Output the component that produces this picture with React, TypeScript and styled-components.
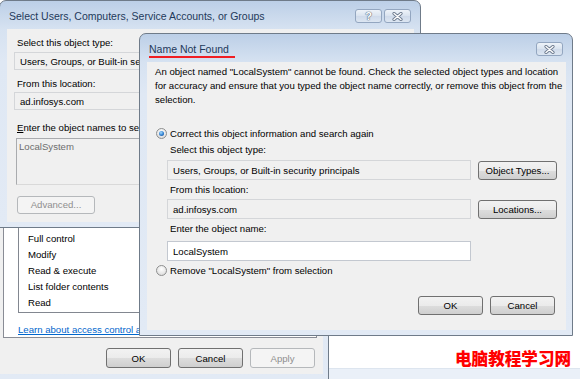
import styled, { createGlobalStyle } from "styled-components";

const GlobalStyle = createGlobalStyle`
  html, body {
    margin: 0;
    padding: 0;
    background: #fff;
  }
`;

const Desktop = styled.div`
  position: relative;
  width: 580px;
  height: 379px;
  overflow: hidden;
  background: #fff;
  font-family: "Liberation Sans", Arial, sans-serif;
  font-size: 9.6px;
  color: #000;
`;

// a window frame placed on the desktop
const Frame = styled.div<{ $left: number; $top: number; $width: number; $height: number }>`
  position: absolute;
  left: ${(p) => p.$left}px;
  top: ${(p) => p.$top}px;
  width: ${(p) => p.$width}px;
  height: ${(p) => p.$height}px;
  box-sizing: border-box;
  display: flex;
  flex-direction: column;
  padding: 0 6px 5px 7px;
  border: 1px solid #6f7b89;
  border-radius: 7px 7px 0 0;
  background: linear-gradient(#bccfe7 0px, #d6e2f1 28px, #dfe8f4 60px, #e2eaf5 100%);
`;

const TitleBar = styled.div`
  height: 28px;
  flex: none;
  display: flex;
  align-items: flex-start;
`;

const Title = styled.span<{ $mark?: boolean }>`
  margin: 8px 0 0 2px;
  font-size: 10.5px;
  line-height: 14px;
  color: #1e395b;
  border-bottom: ${(p) => (p.$mark ? "2px solid #f01e23" : "none")};
  padding-right: ${(p) => (p.$mark ? "6px" : "0")};
`;

const CaptionButtons = styled.div`
  margin-left: auto;
  margin-top: 8px;
  margin-right: 3px;
  display: flex;
  gap: 2px;
`;

const CaptionButton = styled.div`
  width: 27px;
  height: 14px;
  box-sizing: border-box;
  border: 1px solid #93a6c0;
  border-radius: 3px;
  background: linear-gradient(#eef3f9, #d9e3ef 50%, #cfdaea 51%, #dce6f2);
  display: flex;
  align-items: center;
  justify-content: center;
  font-size: 11px;
  font-weight: bold;
  color: #fff;
  text-shadow: 0 0 1px #5b6b80, 0 0 1px #5b6b80, 0 0 1px #5b6b80;
`;

const CloseGlyph = () => (
  <svg width="11" height="9" viewBox="0 0 11 9">
    <path d="M2 1.5 L9 7.5 M9 1.5 L2 7.5" stroke="#6d7b8f" strokeWidth="3.2" strokeLinecap="round" />
    <path d="M2 1.5 L9 7.5 M9 1.5 L2 7.5" stroke="#fff" strokeWidth="1.4" strokeLinecap="round" />
  </svg>
);

const Body = styled.div`
  flex: 1;
  background: #f0f0f0;
  display: flex;
  flex-direction: column;
  min-height: 0;
`;

const Label = styled.div<{ $mt: number; $indent?: number }>`
  margin-top: ${(p) => p.$mt}px;
  padding-left: ${(p) => p.$indent ?? 3}px;
  line-height: 14px;
  white-space: nowrap;
`;

const Field = styled.div<{ $width: number; $height?: number; $white?: boolean; $mt?: number }>`
  width: ${(p) => p.$width}px;
  height: ${(p) => p.$height ?? 20}px;
  margin-top: ${(p) => p.$mt ?? 0}px;
  box-sizing: border-box;
  flex: none;
  border: 1px solid ${(p) => (p.$white ? "#c3c8d0" : "#d4d6d9")};
  background: ${(p) => (p.$white ? "#fff" : "#f0f0f0")};
  padding-left: 5px;
  display: flex;
  align-items: center;
  white-space: nowrap;
  overflow: hidden;
`;

const NamesBox = styled.div`
  margin: 3px 0 0 2px;
  width: 380px;
  height: 47px;
  box-sizing: border-box;
  border: 1px solid #a9abae;
  border-right-color: #d9d9d9;
  border-bottom-color: #d9d9d9;
  padding: 1px 2px;
  line-height: 14px;
  color: #6d6d6d;
`;

const Button = styled.div<{ $width: number; $height?: number; $disabled?: boolean }>`
  width: ${(p) => p.$width}px;
  height: ${(p) => p.$height ?? 19}px;
  box-sizing: border-box;
  flex: none;
  border: 1px solid ${(p) => (p.$disabled ? "#b5b8bb" : "#707070")};
  border-radius: 3px;
  background: ${(p) =>
    p.$disabled
      ? "#f4f4f4"
      : "linear-gradient(#f2f2f2 0%, #ebebeb 50%, #dddddd 51%, #cfcfcf 100%)"};
  color: ${(p) => (p.$disabled ? "#8f8f8f" : "#000")};
  display: flex;
  align-items: center;
  justify-content: center;
  white-space: nowrap;
`;

/* ---------- back: properties window ---------- */

const PropContent = styled.div`
  flex: 1;
  margin: 6px -1px 0 -1px;
  background: #f0f0f0;
  display: flex;
  flex-direction: column;
`;

const TabPage = styled.div`
  margin: 0 6px 0 3px;
  background: #fff;
  border: 1px solid #898c95;
  border-top: none;
  padding: 8px 13px 0 14px;
`;

const PermList = styled.div`
  border: 1px solid #828790;
  padding-bottom: 1px;
`;

const PermHeader = styled.div`
  height: 17px;
  display: flex;
  align-items: center;
  padding-left: 9px;
  white-space: nowrap;
`;

const PermItem = styled.div`
  height: 16px;
  line-height: 16px;
  padding-left: 9px;
  white-space: nowrap;
`;

const HelpLink = styled.div`
  margin-top: 10px;
  line-height: 14px;
  color: #0066cc;
  text-decoration: underline;
  white-space: nowrap;
`;

const PropButtons = styled.div`
  display: flex;
  gap: 7px;
  padding: 10px 0 0 106px;
`;

/* ---------- middle: select users dialog ---------- */

const SelectBody = styled(Body)`
  padding: 7px 7px 0 7px;
`;

const Key = styled.span`
  text-decoration: underline;
`;

/* ---------- front: name not found ---------- */

const NotFoundBody = styled(Body)`
  padding: 3px 11px 0 8px;
`;

const Message = styled.p`
  margin: 0;
  line-height: 14px;
  white-space: nowrap;
`;

const RadioRow = styled.div<{ $mt: number }>`
  margin-top: ${(p) => p.$mt}px;
  padding-left: 1px;
  height: 14px;
  display: flex;
  align-items: center;
  gap: 3px;
  white-space: nowrap;
`;

const Radio = styled.span<{ $checked?: boolean }>`
  width: 11px;
  height: 11px;
  box-sizing: border-box;
  border-radius: 50%;
  border: 1px solid #8e8f8f;
  background: radial-gradient(circle at 50% 35%, #ffffff 0%, #e6e6e6 60%, #cfcfcf 100%);
  display: flex;
  align-items: center;
  justify-content: center;
  &::after {
    content: "";
    display: ${(p) => (p.$checked ? "block" : "none")};
    width: 5px;
    height: 5px;
    border-radius: 50%;
    background: radial-gradient(circle at 40% 35%, #a6dcff 0%, #2f7fd0 55%, #12417f 100%);
  }
`;

const Indent = styled.div`
  padding-left: 12px;
  display: flex;
  flex-direction: column;
`;

const FieldRow = styled.div<{ $mt: number }>`
  margin-top: ${(p) => p.$mt}px;
  display: flex;
  align-items: flex-end;
  gap: 7px;
`;

const DialogButtons = styled.div`
  margin-top: 19px;
  display: flex;
  justify-content: flex-end;
  gap: 7px;
`;

/* ---------- desktop extras ---------- */

const BackStrip = styled.div`
  position: absolute;
  left: 329px;
  top: 368px;
  width: 251px;
  height: 11px;
  background: #eaf0f8;
  border-top: 1px solid #dde5ef;
`;

const Watermark = styled.div`
  position: absolute;
  left: 455px;
  top: 348px;
  font-family: "Noto Sans CJK SC", sans-serif;
  font-size: 16.6px;
  font-weight: 900;
  line-height: 20px;
  color: #ff0000;
  letter-spacing: 0;
  white-space: nowrap;
`;

export default function App() {
  return (
    <Desktop>
      <GlobalStyle />

      <BackStrip />

      <Frame $left={-7} $top={198} $width={336} $height={182}>
        <PropContent>
          <TabPage>
            <PermList>
              <PermHeader>Permissions for SYSTEM</PermHeader>
              <PermItem>Full control</PermItem>
              <PermItem>Modify</PermItem>
              <PermItem>Read &amp; execute</PermItem>
              <PermItem>List folder contents</PermItem>
              <PermItem>Read</PermItem>
            </PermList>
            <HelpLink>Learn about access control and permissions</HelpLink>
          </TabPage>
          <PropButtons>
            <Button $width={65} $height={20}>OK</Button>
            <Button $width={65} $height={20}>Cancel</Button>
            <Button $width={65} $height={20} $disabled>
              Apply
            </Button>
          </PropButtons>
        </PropContent>
      </Frame>

      <Frame $left={-1} $top={0} $width={422} $height={228}>
        <TitleBar>
          <Title>Select Users, Computers, Service Accounts, or Groups</Title>
          <CaptionButtons>
            <CaptionButton>?</CaptionButton>
            <CaptionButton>
              <CloseGlyph />
            </CaptionButton>
          </CaptionButtons>
        </TitleBar>
        <SelectBody>
          <Label $mt={0}>Select this object type:</Label>
          <Field $width={380} $height={18} $mt={2}>
            Users, Groups, or Built-in security principals
          </Field>
          <Label $mt={7}>From this location:</Label>
          <Field $width={380} $height={18} $mt={1}>
            ad.infosys.com
          </Field>
          <Label $mt={11}>
            <Key>E</Key>nter the object names to select (examples):
          </Label>
          <NamesBox>LocalSystem</NamesBox>
          <Label $mt={11} $indent={3}>
            <Button $width={78} $height={18} $disabled>
              Advanced...
            </Button>
          </Label>
        </SelectBody>
      </Frame>

      <Frame $left={139} $top={33} $width={434} $height={303}>
        <TitleBar>
          <Title $mark>Name Not Found</Title>
          <CaptionButtons>
            <CaptionButton>
              <CloseGlyph />
            </CaptionButton>
          </CaptionButtons>
        </TitleBar>
        <NotFoundBody>
          <Message>
            An object named "LocalSystem" cannot be found. Check the selected object types and location
            <br />
            for accuracy and ensure that you typed the object name correctly, or remove this object from the
            <br />
            selection.
          </Message>
          <RadioRow $mt={19}>
            <Radio $checked />
            Correct this object information and search again
          </RadioRow>
          <Indent>
            <Label $mt={3}>Select this object type:</Label>
            <FieldRow $mt={3}>
              <Field $width={304}>Users, Groups, or Built-in security principals</Field>
              <Button $width={79}>Object Types...</Button>
            </FieldRow>
            <Label $mt={3}>From this location:</Label>
            <FieldRow $mt={2}>
              <Field $width={304}>ad.infosys.com</Field>
              <Button $width={79}>Locations...</Button>
            </FieldRow>
            <Label $mt={3}>Enter the object name:</Label>
            <Field $width={304} $white $mt={5}>
              LocalSystem
            </Field>
          </Indent>
          <RadioRow $mt={2}>
            <Radio />
            Remove "LocalSystem" from selection
          </RadioRow>
          <DialogButtons>
            <Button $width={65}>OK</Button>
            <Button $width={65}>Cancel</Button>
          </DialogButtons>
        </NotFoundBody>
      </Frame>

      <Watermark>电脑教程学习网</Watermark>
    </Desktop>
  );
}
